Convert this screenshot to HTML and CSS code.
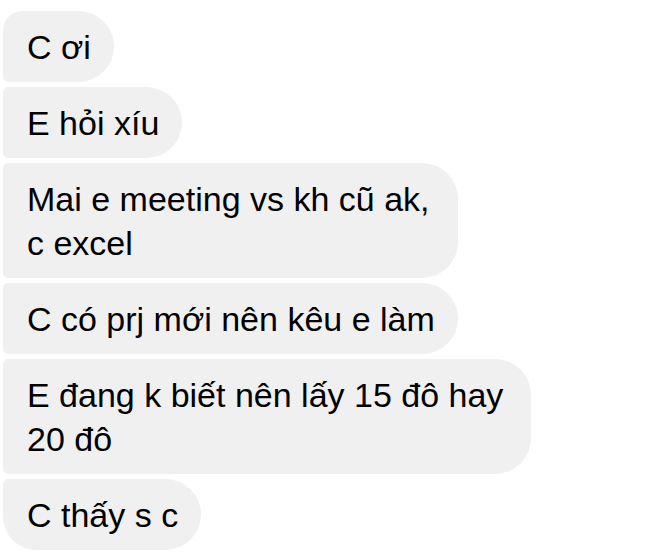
FILE: index.html
```html
<!DOCTYPE html>
<html lang="vi">
  <head>
    <meta charset="UTF-8" />
    <meta name="viewport" content="width=device-width, initial-scale=1.0" />
    <title>Tin nhắn</title>

    <link rel="stylesheet" href="styles.css">
  </head>
  <body>
    <div class="chat">
      <div class="msg first">C ơi</div>
      <div class="msg">E hỏi xíu</div>
      <div class="msg wide">Mai e meeting vs kh cũ ak,<br />c excel</div>
      <div class="msg">C có prj mới nên kêu e làm</div>
      <div class="msg wide">E đang k biết nên lấy 15 đô hay<br />20 đô</div>
      <div class="msg last">C thấy s c</div>
    </div>
  </body>
</html>
```

FILE: styles.css
```css
body {
  margin: 0;
  background-color: #fff;
  font-family: "Liberation Sans", Arial, sans-serif;
}

.chat {
  display: flex;
  flex-direction: column;
  align-items: flex-start;
  gap: 5px;
  padding: 11px 0 0 3px;
}

.chat .msg {
  background-color: #f0f0f0;
  color: #000;
  font-size: 34px;
  line-height: 44px;
  padding: 14px 23px 13px 24px;
  border-radius: 5px 36px 36px 5px;
  white-space: nowrap;
}

/* wrapped bubbles keep some room on the right */
.chat .msg.wide {
  padding-right: 28px;
}

.chat .msg.first {
  border-top-left-radius: 20px;
}

.chat .msg.last {
  border-bottom-left-radius: 34px;
}
```
